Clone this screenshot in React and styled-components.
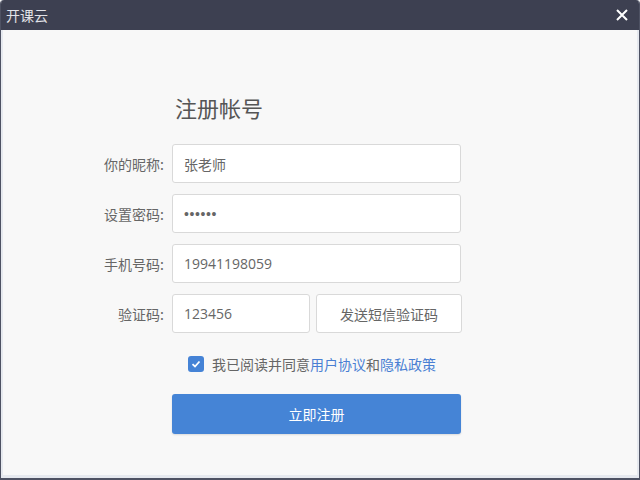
import React from 'react';
import styled, { createGlobalStyle } from 'styled-components';

const GlobalStyle = createGlobalStyle`
  html, body {
    margin: 0;
    padding: 0;
    background: #f8f8f8;
  }
  body {
    font-family: "Noto Sans CJK SC", "Liberation Sans", sans-serif;
  }
`;

const Window = styled.div`
  width: 640px;
  height: 480px;
  box-sizing: border-box;
  display: flex;
  flex-direction: column;
  background: #e6e9ef;
  border: 1px solid #4e5263;
  border-bottom-width: 2px;
  border-top: none;
  border-radius: 4px 4px 0 0;
  overflow: hidden;
`;

const TitleBar = styled.div`
  height: 30px;
  flex: none;
  background: #3d4051;
  display: flex;
  align-items: center;
  justify-content: space-between;
  padding: 0 10px 0 5px;
  color: #e2e3e8;
  font-size: 14px;
`;

const CloseBtn = styled.div`
  width: 14px;
  height: 14px;
  display: flex;
  align-items: center;
  justify-content: center;
`;

const Body = styled.div`
  flex: 1;
  background: #f8f8f8;
  margin: 0 2px 3px 2px;
  display: flex;
  flex-direction: column;
`;

const Form = styled.div`
  width: 380px;
  margin-left: 79px;
  display: flex;
  flex-direction: column;
  padding-top: 60px;
`;

const Heading = styled.h1`
  margin: 0 0 20px 93px;
  font-size: 22px;
  font-weight: 400;
  color: #555;
  line-height: 34px;
`;

const Row = styled.div`
  display: flex;
  align-items: center;
  margin-bottom: 11px;
`;

const Label = styled.label`
  width: 82px;
  text-align: right;
  font-size: 14px;
  color: #666;
  padding-right: 8px;
`;

const Input = styled.div`
  box-sizing: border-box;
  width: ${p => p.$w || 289}px;
  height: 39px;
  background: #fff;
  border: 1px solid #d9d9d9;
  border-radius: 3px;
  padding-left: 11px;
  display: flex;
  align-items: center;
  font-size: 14px;
  color: #666;
  font-family: ${p => p.$num ? '"Open Sans", "Noto Sans", sans-serif' : p.$dots ? '"Liberation Sans", sans-serif' : 'inherit'};
  letter-spacing: ${p => p.$dots ? '0.6px' : '0'};
`;

const SendBtn = styled.div`
  box-sizing: border-box;
  width: 146px;
  height: 39px;
  margin-left: 6px;
  background: #fff;
  border: 1px solid #d9d9d9;
  border-radius: 3px;
  display: flex;
  align-items: center;
  justify-content: center;
  font-size: 14px;
  color: #666;
`;

const Agree = styled.div`
  display: flex;
  align-items: center;
  margin: 10px 0 20px 106px;
  font-size: 14px;
  color: #666;
`;

const Check = styled.span`
  width: 16px;
  height: 16px;
  border-radius: 3px;
  background: #4583d6;
  display: flex;
  align-items: center;
  justify-content: center;
  margin-right: 8px;
`;

const Link = styled.span`
  color: #4a7fd3;
`;

const Submit = styled.div`
  margin-left: 90px;
  width: 289px;
  height: 40px;
  border-radius: 3px;
  background: #4584d6;
  box-shadow: 0 1px 2px rgba(0,0,0,0.12);
  color: #fff;
  font-size: 14px;
  display: flex;
  align-items: center;
  justify-content: center;
`;

export default function App() {
  return (
    <>
      <GlobalStyle />
      <Window>
        <TitleBar>
          <span>开课云</span>
          <CloseBtn>
            <svg width="12" height="12" viewBox="0 0 12 12">
              <path d="M1 1 L11 11 M11 1 L1 11" stroke="#fff" strokeWidth="2" />
            </svg>
          </CloseBtn>
        </TitleBar>
        <Body>
          <Form>
            <Heading>注册帐号</Heading>
            <Row>
              <Label>你的昵称:</Label>
              <Input>张老师</Input>
            </Row>
            <Row>
              <Label>设置密码:</Label>
              <Input $dots>••••••</Input>
            </Row>
            <Row>
              <Label>手机号码:</Label>
              <Input $num>19941198059</Input>
            </Row>
            <Row>
              <Label>验证码:</Label>
              <Input $w={138} $num>123456</Input>
              <SendBtn>发送短信验证码</SendBtn>
            </Row>
            <Agree>
              <Check>
                <svg width="10" height="10" viewBox="0 0 10 10">
                  <path d="M1.5 5.2 L4 7.5 L8.5 2.5" fill="none" stroke="#fff" strokeWidth="1.8" />
                </svg>
              </Check>
              我已阅读并同意<Link>用户协议</Link>和<Link>隐私政策</Link>
            </Agree>
            <Submit>立即注册</Submit>
          </Form>
        </Body>
      </Window>
    </>
  );
}
